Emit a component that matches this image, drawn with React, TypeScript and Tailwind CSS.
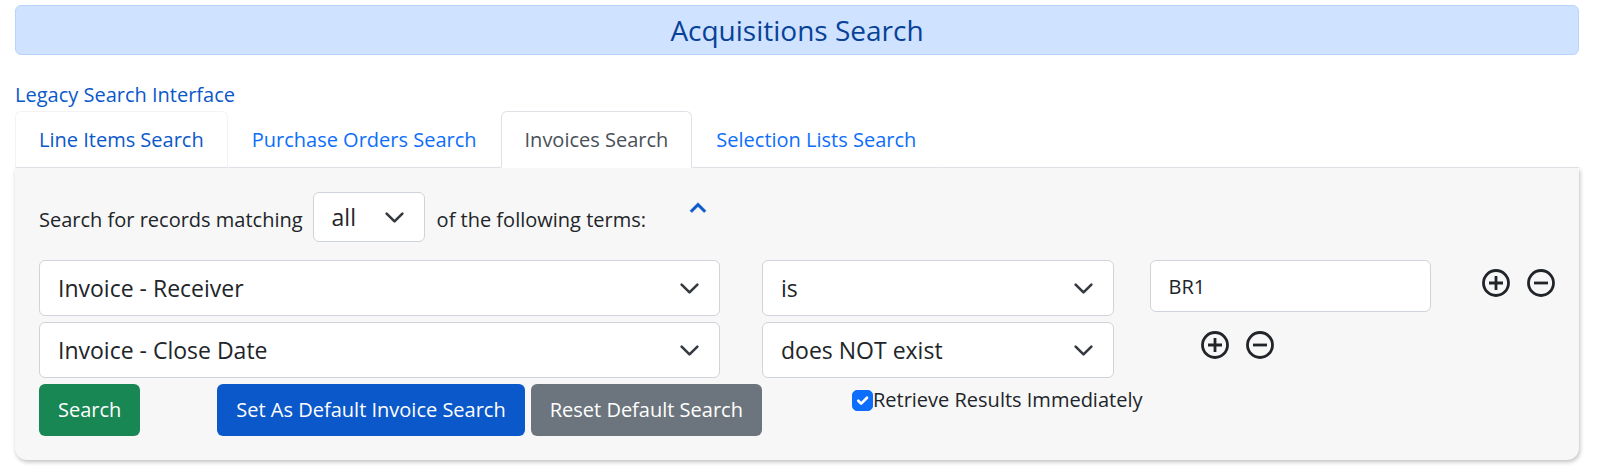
import { useState } from "react";
import type { ReactNode, SelectHTMLAttributes } from "react";

function SelectBox({ children, className = "", ...rest }: SelectHTMLAttributes<HTMLSelectElement> & { children: ReactNode }) {
  return (
    <div className="grid">
      <select
        {...rest}
        className={`col-start-1 row-start-1 w-full appearance-none rounded-md border border-[#ced4da] bg-white pr-12 pl-[18px] text-[23px] text-[#212529] ${className}`}
      >
        {children}
      </select>
      <svg
        viewBox="0 0 16 16"
        className="pointer-events-none col-start-1 row-start-1 mr-5 h-[21px] w-[21px] self-center justify-self-end"
        fill="none"
        stroke="#343a40"
        strokeWidth="2"
        strokeLinecap="round"
        strokeLinejoin="round"
        aria-hidden="true"
      >
        <path d="m2 5 6 6 6-6" />
      </svg>
    </div>
  );
}

function RoundButton({ label, plus = false }: { label: string; plus?: boolean }) {
  return (
    <button type="button" aria-label={label} className="text-[#212529]">
      <svg viewBox="0 0 28 28" className="h-7 w-7" fill="none" stroke="currentColor" strokeWidth="2.8" aria-hidden="true">
        <circle cx="14" cy="14" r="12.5" />
        <path d={plus ? "M7 14h14M14 7v14" : "M7 14h14"} />
      </svg>
    </button>
  );
}

function TermRow({ field, operator, value }: { field: string; operator: string; value?: string }) {
  const [text, setText] = useState(value ?? "");
  return (
    <div className="grid grid-cols-[minmax(0,688fr)_minmax(0,352fr)_minmax(0,406fr)] items-start gap-x-9">
      <div className="pr-1.5">
        <SelectBox aria-label="Search field" defaultValue={field} className="h-14">
          <option>Invoice - Receiver</option>
          <option>Invoice - Close Date</option>
        </SelectBox>
      </div>
      <SelectBox aria-label="Operator" defaultValue={operator} className="h-14">
        <option>is</option>
        <option>does NOT exist</option>
      </SelectBox>
      <div className="flex items-start">
        {value !== undefined && (
          <input
            type="text"
            aria-label="Search value"
            value={text}
            onChange={(e) => setText(e.target.value)}
            className="h-[52px] min-w-0 flex-1 rounded-md border border-[#ced4da] bg-white px-[18px] text-[#212529]"
          />
        )}
        <div className="mt-[9px] ml-[51px] flex gap-[17px]">
          <RoundButton label="Add search term" plus />
          <RoundButton label="Remove search term" />
        </div>
      </div>
    </div>
  );
}

const tabs = [
  { name: "Line Items Search", style: "border-[#f1f3f5] border-b-[#dee2e6] text-[#0a58ca]" },
  { name: "Purchase Orders Search", style: "border-transparent border-b-[#dee2e6] text-[#0d6efd]" },
  { name: "Invoices Search", style: "border-[#dee2e6] border-b-white bg-white text-[#495057]" },
  { name: "Selection Lists Search", style: "border-transparent border-b-[#dee2e6] text-[#0d6efd]" },
];

export default function App() {
  const [immediate, setImmediate] = useState(true);
  return (
    <main className="bg-white pt-[5px] pr-[21px] pb-3 pl-[15px] font-['Open_Sans',sans-serif] text-[20px] leading-8 text-[#212529]">
      <h1 className="rounded-md border border-[#b6d4fe] bg-[#cfe2ff] py-1.5 text-center text-[28px] leading-9 text-[#084298]">
        Acquisitions Search
      </h1>

      <div className="mt-6">
        <a href="#legacy" className="text-[#0a58ca]">Legacy Search Interface</a>
      </div>

      <nav className="flex" aria-label="Search type">
        {tabs.map((tab) => (
          <a
            key={tab.name}
            href="#search"
            aria-current={tab.name === "Invoices Search" ? "page" : undefined}
            className={`rounded-t-md border px-[23px] pt-3 pb-[11px] whitespace-nowrap ${tab.style}`}
          >
            {tab.name}
          </a>
        ))}
        <div className="flex-1 border-b border-[#dee2e6]" />
      </nav>

      <form
        onSubmit={(e) => e.preventDefault()}
        className="rounded-b-xl bg-[#f7f7f7] px-6 py-6 shadow-[1px_2px_4px_rgba(0,0,0,0.25)]"
      >
        <div className="flex items-start">
          <label htmlFor="match" className="mt-3">Search for records matching</label>
          <div className="mr-3 ml-2.5 w-28">
            <SelectBox id="match" defaultValue="all" className="h-[50px]">
              <option>all</option>
              <option>any</option>
            </SelectBox>
          </div>
          <span className="mt-3">of the following terms:</span>
          <button type="button" aria-label="Hide search form" className="ml-9 text-[#0a58ca]">
            <svg viewBox="0 0 24 24" className="h-8 w-8" fill="currentColor" aria-hidden="true">
              <path d="m12 8-6 6 1.41 1.41L12 10.83l4.59 4.58L18 14z" stroke="currentColor" strokeWidth="0.4" />
            </svg>
          </button>
        </div>

        <div className="mt-[18px] flex flex-col gap-1.5">
          <TermRow field="Invoice - Receiver" operator="is" value="BR1" />
          <TermRow field="Invoice - Close Date" operator="does NOT exist" />

          <div className="flex items-start text-white">
            <button type="submit" className="h-[52px] rounded-md bg-[#198754] px-[19px]">Search</button>
            <button type="button" className="ml-[77px] h-[52px] rounded-md bg-[#0a58ca] px-[19px]">
              Set As Default Invoice Search
            </button>
            <button type="button" className="ml-1.5 h-[52px] rounded-md bg-[#6c757d] px-[19px]">Reset Default Search</button>
            <div className="ml-[90px] flex items-center text-[#212529]">
              <div className="grid">
                <input
                  id="immediate"
                  type="checkbox"
                  checked={immediate}
                  onChange={(e) => setImmediate(e.target.checked)}
                  className="peer col-start-1 row-start-1 h-[21px] w-[21px] appearance-none rounded-[5px] border border-[#adb5bd] bg-white checked:border-[#0d6efd] checked:bg-[#0d6efd]"
                />
                <svg
                  viewBox="0 0 20 20"
                  className="pointer-events-none invisible col-start-1 row-start-1 h-[21px] w-[21px] peer-checked:visible"
                  fill="none"
                  stroke="#fff"
                  strokeWidth="2.6"
                  strokeLinecap="round"
                  strokeLinejoin="round"
                  aria-hidden="true"
                >
                  <path d="m6 10.3 2.7 2.7 5.6-5.6" />
                </svg>
              </div>
              <label htmlFor="immediate">Retrieve Results Immediately</label>
            </div>
          </div>
        </div>
      </form>
    </main>
  );
}
